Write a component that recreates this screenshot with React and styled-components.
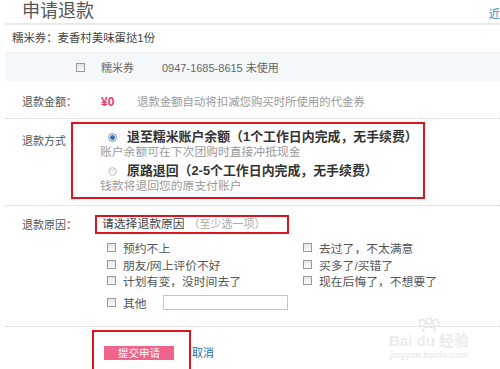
import React from 'react';
import styled, { createGlobalStyle } from 'styled-components';

const GlobalStyle = createGlobalStyle`
  body {
    margin: 0;
    background: #fff;
    font-family: "Liberation Sans", "Noto Sans CJK SC", sans-serif;
    font-size: 12px;
    color: #555;
  }
`;

const Page = styled.div`
  position: relative;
  width: 500px;
  height: 369px;
  overflow: hidden;
  background: #fff;
`;

const Header = styled.div`
  display: flex;
  justify-content: space-between;
  align-items: flex-start;
  margin-left: 5px;
  padding-left: 17px;
  height: 23px;
  border-bottom: 2px solid #e8e8e8;
`;

const Title = styled.h1`
  margin: 1px 0 0;
  font-size: 18px;
  font-weight: normal;
  line-height: 21px;
  color: #555;
`;

const TopLink = styled.a`
  margin: 5px 0 0 0;
  font-size: 11.5px;
  color: #3b8ac4;
  text-decoration: none;
`;

const Goods = styled.p`
  margin: 5px 0 0 12px;
  font-size: 11.4px;
  line-height: 16px;
  color: #444;
`;

const Band = styled.div`
  display: flex;
  align-items: center;
  margin: 6px 0 0 5px;
  padding-left: 71px;
  height: 28px;
  background: #f4f8fb;
  border-top: 1px solid #eef2f5;
  font-size: 11px;
  color: #666;
`;

const Box = styled.span`
  display: inline-block;
  width: 7px;
  height: 7px;
  border: 1px solid #9a9a9a;
  background: linear-gradient(#e6e6e6, #fafafa);
  flex-shrink: 0;
`;

const BandText = styled.span`
  margin-left: ${(p) => p.gap}px;
`;

const Section = styled.div`
  display: flex;
  align-items: flex-start;
  margin-left: 5px;
  padding: ${(p) => p.pad || '0'};
  border-bottom: 1px dotted #cfcfcf;
`;

const Label = styled.div`
  box-sizing: border-box;
  width: ${(p) => p.w}px;
  flex-shrink: 0;
  padding-left: 17px;
  margin-top: ${(p) => p.top || 0}px;
  font-size: 11px;
  line-height: 16px;
  color: #555;
`;

const Amount = styled.span`
  width: 36px;
  font-size: 12px;
  font-weight: bold;
  line-height: 16px;
  color: #e8386c;
`;

const Hint = styled.span`
  font-size: 11.4px;
  line-height: 16px;
  color: #9a9a9a;
`;

const Highlight = styled.div`
  border: 2px solid #e0141e;
  padding: ${(p) => p.pad};
  width: ${(p) => p.w}px;
  height: ${(p) => (p.h ? `${p.h}px` : 'auto')};
  box-sizing: border-box;
  flex-shrink: 0;
`;

const Option = styled.div`
  & + & {
    margin-top: 4px;
  }
`;

const OptionTitle = styled.div`
  display: flex;
  align-items: center;
  padding-left: 8px;
  font-size: 12.9px;
  font-weight: bold;
  line-height: 16px;
  color: #333;
`;

const Radio = styled.span`
  width: 9px;
  height: 9px;
  margin-right: 10px;
  border-radius: 50%;
  box-sizing: border-box;
  border: 1px solid ${(p) => (p.checked ? '#7e9bb8' : '#c8c8c8')};
  background: ${(p) =>
    p.checked
      ? 'radial-gradient(circle, #2a6cb5 0 2px, #dbe8f5 2.5px)'
      : 'linear-gradient(#e8e8e8, #f8f8f8)'};
`;

const OptionSub = styled.div`
  font-size: 11.8px;
  line-height: 14px;
  color: #9a9a9a;
`;

const ReasonBody = styled.div`
  display: flex;
  flex-direction: column;
`;

const ReasonHead = styled.div`
  display: flex;
  align-items: center;
  font-size: 11.8px;
  line-height: 15px;
  color: #444;
`;

const Muted = styled.span`
  margin-left: 4px;
  color: #aaa;
  font-size: 11px;
`;

const Reasons = styled.div`
  display: grid;
  grid-template-columns: 196px 1fr;
  margin: 5px 0 0 12px;
`;

const Reason = styled.label`
  display: flex;
  align-items: center;
  gap: 7px;
  height: 16.7px;
  font-size: 11.8px;
  color: #555;
  grid-column: ${(p) => (p.wide ? '1 / 3' : 'auto')};
  margin-top: ${(p) => (p.wide ? 5 : 0)}px;
`;

const OtherInput = styled.span`
  display: inline-block;
  width: 125px;
  height: 15px;
  margin-left: 9px;
  box-sizing: border-box;
  border: 1px solid #c4c4c4;
  background: #fff;
`;

const Actions = styled.div`
  display: flex;
  align-items: flex-start;
  padding: 3px 0 0 92px;
`;

const SubmitButton = styled.button`
  width: 70px;
  height: 14px;
  padding: 0;
  border: none;
  background: #f0638a;
  color: #fff;
  font-family: inherit;
  font-size: 10.5px;
  line-height: 14px;
`;

const Cancel = styled.a`
  margin: 16px 0 0 1px;
  font-size: 11px;
  line-height: 14px;
  color: #2a6fa8;
  text-decoration: none;
`;

const Watermark = styled.div`
  position: absolute;
  left: 383px;
  top: 318px;
  width: 92px;
  color: #ececec;
  text-align: center;
  pointer-events: none;
`;

const MarkLogo = styled.div`
  font-size: 15px;
  font-weight: bold;
  line-height: 16px;
  margin-top: -2px;
`;

const MarkUrl = styled.div`
  font-size: 9px;
  line-height: 12px;
  font-weight: bold;
`;

const reasons = [
  '预约不上',
  '去过了，不太满意',
  '朋友/网上评价不好',
  '买多了/买错了',
  '计划有变，没时间去了',
  '现在后悔了，不想要了',
];

export default function App() {
  return (
    <Page>
      <GlobalStyle />
      <Header>
        <Title>申请退款</Title>
        <TopLink href="#">近</TopLink>
      </Header>

      <Goods>糯米券：麦香村美味蛋挞1份</Goods>

      <Band>
        <Box />
        <BandText gap={16}>糯米券</BandText>
        <BandText gap={28}>0947-1685-8615 未使用</BandText>
      </Band>

      <Section pad="13px 0 8px">
        <Label w={96}>退款金额：</Label>
        <Amount>¥0</Amount>
        <Hint>退款金额自动将扣减您购买时所使用的代金券</Hint>
      </Section>

      <Section pad="3px 0 6px">
        <Label w={66} top={11}>退款方式</Label>
        <Highlight w={354} pad="5px 0 4px 27px">
          <Option>
            <OptionTitle>
              <Radio checked />
              退至糯米账户余额（1个工作日内完成，无手续费）
            </OptionTitle>
            <OptionSub>账户余额可在下次团购时直接冲抵现金</OptionSub>
          </Option>
          <Option>
            <OptionTitle>
              <Radio />
              原路退回（2-5个工作日内完成，无手续费）
            </OptionTitle>
            <OptionSub>钱款将退回您的原支付账户</OptionSub>
          </Option>
        </Highlight>
      </Section>

      <Section pad="9px 0 15px">
        <Label w={90} top={2}>退款原因：</Label>
        <ReasonBody>
          <Highlight w={194} h={19} pad="0 0 0 5px">
            <ReasonHead>
              请选择退款原因<Muted>（至少选一项）</Muted>
            </ReasonHead>
          </Highlight>
          <Reasons>
            {reasons.map((r) => (
              <Reason key={r}>
                <Box />
                {r}
              </Reason>
            ))}
            <Reason wide>
              <Box />
              其他
              <OtherInput />
            </Reason>
          </Reasons>
        </ReasonBody>
      </Section>

      <Actions>
        <Highlight w={99} h={50} pad="14px 0 0 10px">
          <SubmitButton>提交申请</SubmitButton>
        </Highlight>
        <Cancel href="#">取消</Cancel>
      </Actions>

      <Watermark>
        <svg width="34" height="14" viewBox="0 0 34 14" fill="none" stroke="#e8e8e8" strokeWidth="1.5">
          <ellipse cx="10" cy="5" rx="3" ry="3.5" />
          <ellipse cx="17" cy="3" rx="3" ry="3" />
          <ellipse cx="24" cy="5" rx="3" ry="3.5" />
          <ellipse cx="17" cy="12" rx="6" ry="3" />
        </svg>
        <MarkLogo>Bai du 经验</MarkLogo>
        <MarkUrl>jingyan.baidu.com</MarkUrl>
      </Watermark>
    </Page>
  );
}
